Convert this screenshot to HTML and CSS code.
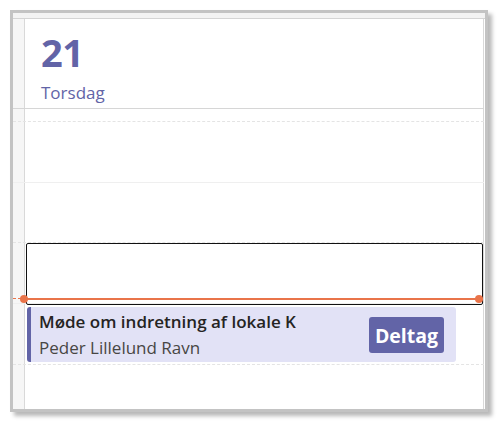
FILE: index.html
```html
<!DOCTYPE html>
<html lang="da">
<head>
<meta charset="utf-8">
<title>Kalender</title>
<link rel="stylesheet" href="styles.css">
</head>
<body>
  <div class="frame">
    <div class="topband"></div>
    <div class="view">
      <div class="day-header">
        <div class="day-num">21</div>
        <div class="day-name">Torsdag</div>
      </div>
      <div class="slot slot-first half"></div>
      <div class="slot hour"></div>
      <div class="slot slot-short half"></div>
      <div class="slot hour"></div>
      <div class="slot half slot-event">
        <div class="event">
          <div class="event-text">
            <div class="event-title">Møde om indretning af lokale K</div>
            <div class="event-org">Peder Lillelund Ravn</div>
          </div>
          <button class="join">Deltag</button>
        </div>
      </div>
      <div class="slot slot-last"></div>

      <div class="selection"></div>
      <div class="now-line">
        <span class="now-dot now-dot-start"></span>
        <span class="now-dot now-dot-end"></span>
      </div>
    </div>
  </div>
</body>
</html>
```

FILE: styles.css
```css
* { box-sizing: border-box; }

html, body {
  margin: 0;
  padding: 0;
  background: #ffffff;
}

body {
  padding: 10px;
  font-family: "Open Sans", "Noto Sans", sans-serif;
}

.frame {
  width: 478px;
  height: 402px;
  border: 3px solid #c3c3c3;
  box-shadow: 4px 4px 4px rgba(0, 0, 0, 0.28);
  background: #ffffff;
  display: flex;
  flex-direction: column;
}

.topband {
  height: 6px;
  background: #f3f3f3;
  border-bottom: 1px solid #d4d4d4;
  flex: none;
}

.view {
  position: relative;
  flex: 1;
  display: flex;
  flex-direction: column;
  padding-right: 1px;
  background:
    linear-gradient(to right, #f6f6f6 0 11px, #d9d9d9 11px 12px, #ffffff 12px) left top / calc(100% - 2px) 100% no-repeat,
    linear-gradient(#d9d9d9, #d9d9d9) right 1px top / 1px 100% no-repeat,
    #ffffff;
}

.day-header {
  height: 90px;
  border-bottom: 1px solid #d6d6d6;
  padding: 11px 0 0 28px;
  color: #6264a7;
  flex: none;
}

.day-num {
  font-size: 38px;
  font-weight: 700;
  line-height: 44px;
  letter-spacing: -0.5px;
}

.day-name {
  font-size: 17px;
  font-weight: 500;
  line-height: 22px;
  margin-top: 8px;
}

.slot {
  flex: none;
  height: 61px;
}

.slot.half { border-bottom: 1px dashed #e4e4e4; }
.slot.hour { border-bottom: 1px solid #efefef; }

.slot-first { height: 13px; }
.slot-short { height: 60px; }

.slot-event {
  padding: 3px 0 0 14px;
}

.slot-last {
  flex: 1;
  height: auto;
}

.event {
  width: 429px;
  height: 55px;
  background: #e2e2f6;
  border-left: 4px solid #6264a7;
  border-radius: 3px;
  display: flex;
  align-items: center;
  justify-content: space-between;
  padding: 0 12px 0 8px;
}

.event-text {
  display: flex;
  flex-direction: column;
}

.event-title {
  font-size: 17px;
  font-weight: 600;
  color: #252423;
  line-height: 26px;
  margin-top: -1px;
}

.event-org {
  font-size: 17px;
  font-weight: 400;
  color: #484644;
  line-height: 25px;
}

.join {
  width: 75px;
  height: 36px;
  border: none;
  border-radius: 3px;
  background: #6264a7;
  color: #ffffff;
  font-family: inherit;
  font-size: 19.5px;
  font-weight: 700;
  padding: 0;
  margin-top: 1px;
}

.selection {
  position: absolute;
  left: 13px;
  top: 224px;
  width: 457px;
  height: 62px;
  border: 1px solid #111111;
  border-radius: 2px;
}

.now-line {
  position: absolute;
  left: 0;
  top: 279px;
  width: 470px;
  height: 2px;
  background: linear-gradient(to right, transparent 0 8px, #e9744a 8px);
}

.now-line::before {
  content: "";
  position: absolute;
  left: 0;
  top: 0;
  width: 8px;
  border-top: 1px dashed #e9744a;
}

.now-dot {
  position: absolute;
  top: -3px;
  width: 8px;
  height: 8px;
  border-radius: 50%;
  background: #e9744a;
}

.now-dot-start { left: 7px; }
.now-dot-end { right: 0; }
```
